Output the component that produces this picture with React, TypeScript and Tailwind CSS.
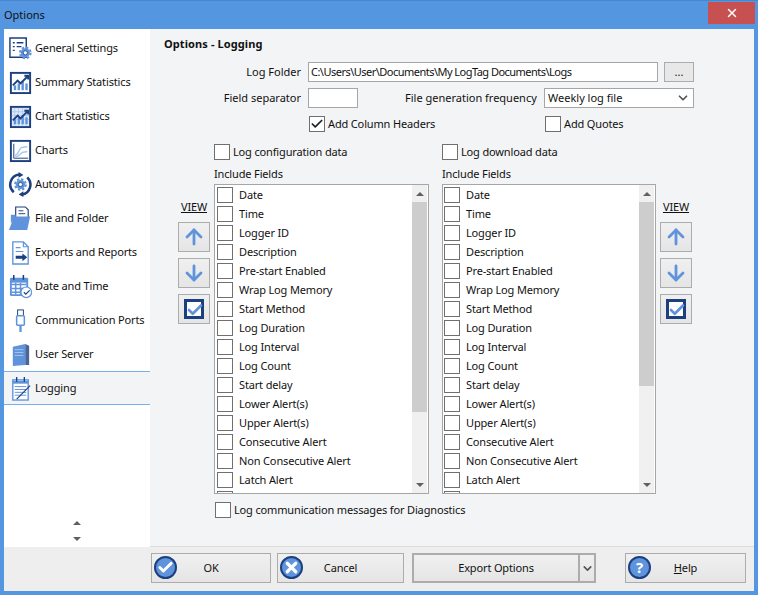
import { X, ChevronDown, Check, ArrowUp, ArrowDown } from 'lucide-react';

const NAVY = '#1c3f7f';
const BLUE = '#5f94dc';
const PALE = '#a9c6ec';

const Gear = ({ cx, cy, r }: { cx: number; cy: number; r: number }) => (
  <g>
    <circle cx={cx} cy={cy} r={r * 0.92} fill="none" stroke={BLUE} strokeWidth={r * 0.36} strokeDasharray={`${r * 0.42} ${r * 0.3}`} />
    <circle cx={cx} cy={cy} r={r * 0.8} fill={BLUE} />
    <circle cx={cx} cy={cy} r={r * 0.36} fill="#fff" stroke={NAVY} strokeWidth="0.8" />
  </g>
);

const Bars = () => (
  <g fill={BLUE}>
    <rect x="6" y="16" width="2.5" height="5" />
    <rect x="10" y="14" width="2.5" height="7" />
    <rect x="14" y="12" width="2.5" height="9" />
    <rect x="18" y="14" width="2.5" height="7" />
  </g>
);

const Icons: Record<string, React.ReactNode> = {
  settings: (
    <>
      <path d="M2 2h17v20H2z" fill="#fff" stroke={NAVY} strokeWidth="1.5" />
      <path d="M5 7h2M9 7h7M5 11h2M9 11h5M5 15h2" stroke={NAVY} strokeWidth="1.4" />
      <Gear cx={18} cy={17.5} r={6} />
    </>
  ),
  summary: (
    <>
      <rect x="3" y="3" width="20" height="21" fill="#fff" stroke={NAVY} strokeWidth="2" />
      <Bars />
      <path d="M5 16l5-5 3 3 7-7M17 6h4v4" fill="none" stroke={NAVY} strokeWidth="2" />
    </>
  ),
  chart: (
    <>
      <rect x="3" y="3" width="20" height="21" fill="#dce8f7" stroke={NAVY} strokeWidth="2" />
      <path d="M7 4v19M11 4v19M15 4v19M19 4v19M4 8h18M4 12h18M4 16h18" stroke={PALE} strokeWidth="0.8" />
      <Bars />
      <path d="M5 17l5-5 3 3 7-7M17 7h4v4" fill="none" stroke={NAVY} strokeWidth="2" />
    </>
  ),
  charts: (
    <>
      <rect x="3" y="3" width="20" height="21" fill="#fff" stroke={NAVY} strokeWidth="2" />
      <path d="M6 6v15h15" fill="none" stroke={NAVY} strokeWidth="1" />
      <path d="M7 18c4 0 4-7 7-8s3-1 6-1" fill="none" stroke={PALE} strokeWidth="1.5" />
      <path d="M7 20c4 0 6-4 8-5s3 0 5-1" fill="none" stroke={PALE} strokeWidth="1.5" />
    </>
  ),
  automation: (
    <>
      <path d="M6 21A10.5 10.5 0 0 1 12 2.6M20 5.5A10.5 10.5 0 0 1 15 23.4" fill="none" stroke={NAVY} strokeWidth="2.6" />
      <path d="M11 0l5 3-5 3zM16 20l-5 3.4 5 2.6z" fill={NAVY} />
      <Gear cx={13} cy={13} r={6} />
    </>
  ),
  folder: (
    <>
      <path d="M8 1h10l3 3v12H8z" fill="#fff" stroke={NAVY} strokeWidth="1.2" />
      <path d="M11 5h5M11 8h7" stroke={NAVY} strokeWidth="1" />
      <path d="M6 12l2-1h15l-3 14H1z" fill={BLUE} />
      <path d="M3 18V9h5v3z" fill={BLUE} />
    </>
  ),
  exports: (
    <>
      <path d="M5 2h11l5 5v18H5z" fill="#fff" stroke={BLUE} strokeWidth="1.4" />
      <path d="M16 2v5h5" fill="none" stroke={BLUE} strokeWidth="1.2" />
      <path d="M8 8h5M8 12h8" stroke={BLUE} strokeWidth="1.2" />
      <path d="M8 16.5h7V14l5 4-5 4v-2.5H8z" fill={NAVY} />
    </>
  ),
  date: (
    <>
      <rect x="2" y="4" width="19" height="19" rx="1.5" fill={BLUE} />
      <rect x="4" y="9" width="15" height="12" fill="#fff" />
      <path d="M6 1v5M16 1v5" stroke={NAVY} strokeWidth="1.6" />
      <path d="M4 11h15M4 15h15M4 19h15M8 9v12M13 9v12" stroke={BLUE} strokeWidth="1.5" />
      <circle cx="19" cy="19" r="5.5" fill="#fff" stroke={BLUE} strokeWidth="1.2" />
      <path d="M16.5 19l2 2 4-4" fill="none" stroke={NAVY} strokeWidth="1.2" />
    </>
  ),
  usb: (
    <>
      <rect x="10" y="2" width="6" height="6" fill="#fff" stroke={NAVY} strokeWidth="1" />
      <rect x="9" y="8" width="8" height="10" rx="1" fill="#fff" stroke={BLUE} strokeWidth="1.6" />
      <path d="M13 18v7" stroke={BLUE} strokeWidth="2.4" />
    </>
  ),
  server: (
    <>
      <path d="M5 5l13-3v22l-13 1z" fill={BLUE} />
      <path d="M18 2l4 2v20l-4 0z" fill={NAVY} opacity="0.8" />
      <path d="M7 8h9M7 11h9M7 14h9" stroke={PALE} strokeWidth="1" />
    </>
  ),
  logging: (
    <>
      <rect x="5" y="4" width="16" height="21" fill="#fff" stroke={BLUE} strokeWidth="1.4" />
      <path d="M5 5h16v3H5z" fill={BLUE} />
      <path d="M9 1v5M17 1v5" stroke={NAVY} strokeWidth="1.4" />
      <path d="M7 11h12M7 14h12M7 17h12M7 20h12" stroke={BLUE} strokeWidth="1" />
      <path d="M9 24L23 10" stroke={NAVY} strokeWidth="1.2" />
    </>
  ),
};

const navItems = [
  ['settings', 'General Settings'],
  ['summary', 'Summary Statistics'],
  ['chart', 'Chart Statistics'],
  ['charts', 'Charts'],
  ['automation', 'Automation'],
  ['folder', 'File and Folder'],
  ['exports', 'Exports and Reports'],
  ['date', 'Date and Time'],
  ['usb', 'Communication Ports'],
  ['server', 'User Server'],
  ['logging', 'Logging'],
];

const fields = [
  'Date',
  'Time',
  'Logger ID',
  'Description',
  'Pre-start Enabled',
  'Wrap Log Memory',
  'Start Method',
  'Log Duration',
  'Log Interval',
  'Log Count',
  'Start delay',
  'Lower Alert(s)',
  'Upper Alert(s)',
  'Consecutive Alert',
  'Non Consecutive Alert',
  'Latch Alert',
  '',
];

const Box = ({ checked = false }: { checked?: boolean }) => (
  <span className="flex h-4 w-4 shrink-0 items-center justify-center border border-[#707070] bg-white">
    {checked && <Check size={14} strokeWidth={3} className="text-[#222]" />}
  </span>
);

const Triangle = ({ down = false }: { down?: boolean }) => (
  <span
    className={
      down
        ? 'h-0 w-0 border-x-[4px] border-t-[4px] border-x-transparent border-t-[#606060]'
        : 'h-0 w-0 border-x-[4px] border-b-[4px] border-x-transparent border-b-[#606060]'
    }
  />
);

const FieldList = ({ inset, width, thumb }: { inset: string; width: string; thumb: string }) => (
  <div className={`flex h-[310px] ${width} overflow-hidden border border-[#a6a6a6] bg-white`}>
    <div className={`flex-1 overflow-hidden pt-[2px] ${inset}`}>
      {fields.map((f, i) => (
        <div key={i} className="mb-[3px] flex h-4 items-center gap-[6px]">
          <Box />
          <span>{f}</span>
        </div>
      ))}
    </div>
    <div className="mr-px flex w-[15px] flex-col bg-[#f0f0f0]">
      <div className="flex h-[17px] items-center justify-center">
        <Triangle />
      </div>
      <div className={`${thumb} bg-[#cdcdcd]`} />
      <div className="mt-auto flex h-[17px] items-center justify-center">
        <Triangle down />
      </div>
    </div>
  </div>
);

const SquareButton = ({ children }: { children: React.ReactNode }) => (
  <div className="flex h-[30px] w-8 items-center justify-center border border-[#acacac] bg-linear-to-b from-[#f0f0f0] to-[#e5e5e5]">
    {children}
  </div>
);

const ViewColumn = () => (
  <div className="flex w-8 flex-col items-center gap-[6px] pt-[55px]">
    <span className="mb-px h-4 leading-4 underline">VIEW</span>
    <SquareButton>
      <ArrowUp size={24} strokeWidth={2.8} color={BLUE} />
    </SquareButton>
    <SquareButton>
      <ArrowDown size={24} strokeWidth={2.8} color={BLUE} />
    </SquareButton>
    <SquareButton>
      <span className="relative h-5 w-5 border-[3px] border-[#1c3f7f] bg-white">
        <Check size={18} strokeWidth={3.5} color={BLUE} className="absolute -left-px -top-px" />
      </span>
    </SquareButton>
  </div>
);

const Disc = ({ children }: { children: React.ReactNode }) => (
  <span className="flex h-[23px] w-[23px] shrink-0 items-center justify-center rounded-full border-2 border-[#1c3f7f] bg-[#5f94dc] text-white">
    {children}
  </span>
);

const FootButton = ({ width, icon, label }: { width: string; icon: React.ReactNode; label: React.ReactNode }) => (
  <div className={`relative flex h-[30px] ${width} items-center justify-center border border-[#acacac] bg-linear-to-b from-[#f0f0f0] to-[#e5e5e5]`}>
    <span className="absolute left-[2px] top-[2px]">{icon}</span>
    {label}
  </div>
);

export default function App() {
  return (
    <div className="flex h-[595px] w-[758px] flex-col bg-[#5596e0] font-['Noto_Sans',sans-serif] text-[11px] tracking-[-0.15px] text-[#111]">
      <div className="flex h-[29px] shrink-0 items-start justify-between border-t border-[#4a86cc] pl-1 pr-[3px]">
        <span className="mt-[6px] leading-4 tracking-normal">Options</span>
        <div className="mt-px flex h-[22px] w-[47px] items-center justify-center bg-[#c75050]">
          <X size={14} strokeWidth={2.5} className="text-white" />
        </div>
      </div>

      <div className="mx-1 mb-1 flex flex-1 flex-col">
        <div className="flex h-[518px]">
          <nav className="flex w-[146px] shrink-0 flex-col bg-white pt-[2px]">
            {navItems.map(([id, label]) => (
              <div
                key={id}
                className={
                  id === 'logging'
                    ? 'flex h-[34px] items-center gap-[2px] border-y border-[#7ab0e8] bg-[#f3f4f6] pl-1'
                    : 'flex h-[34px] items-center gap-[2px] pl-1'
                }
              >
                <svg viewBox="0 0 26 26" className="h-[25px] w-[25px] shrink-0">
                  {Icons[id]}
                </svg>
                <span>{label}</span>
              </div>
            ))}
            <div className="mt-auto mb-[6px] flex flex-col items-center gap-[12px] pr-[1px]">
              <Triangle />
              <Triangle down />
            </div>
          </nav>

          <main className="flex flex-1 flex-col border-b border-[#dcdcdc] bg-[#f3f4f6]">
            <h1 className="ml-[14px] mt-[7px] h-4 font-bold leading-4 tracking-[0.1px]">Options - Logging</h1>

            <div className="mt-[10px] flex h-5 items-center tracking-normal">
              <label className="w-[151px] text-right">Log Folder</label>
              <div className="ml-[7px] flex h-5 w-[350px] items-center overflow-hidden whitespace-nowrap border border-[#a6a6a6] bg-white pl-[2px] tracking-[-0.52px]">
                C:\Users\User\Documents\My LogTag Documents\Logs
              </div>
              <div className="ml-[6px] flex h-5 w-[30px] items-center justify-center border border-[#acacac] bg-[#e8e8e8]">
                ...
              </div>
            </div>

            <div className="mt-[6px] flex h-5 items-center tracking-normal">
              <label className="w-[151px] text-right">Field separator</label>
              <div className="ml-[7px] h-5 w-[50px] border border-[#a6a6a6] bg-white" />
              <label className="ml-[47px] w-[132px] whitespace-nowrap">File generation frequency</label>
              <div className="ml-[7px] flex h-5 w-[150px] items-center justify-between border border-[#a6a6a6] bg-white pl-[3px] pr-[3px]">
                <span>Weekly log file</span>
                <ChevronDown size={14} strokeWidth={3} className="text-[#555]" />
              </div>
            </div>

            <div className="mt-2 flex h-4 items-center">
              <div className="ml-[159px] flex w-[236px] items-center gap-[3px]">
                <Box checked />
                <span>Add Column Headers</span>
              </div>
              <div className="flex items-center gap-[3px]">
                <Box />
                <span>Add Quotes</span>
              </div>
            </div>

            <div className="ml-[28px] mt-3 flex">
              <ViewColumn />
              <div className="ml-1 flex flex-col">
                <div className="flex h-4 items-center gap-[3px]">
                  <Box />
                  <span>Log configuration data</span>
                </div>
                <div className="flex h-6 items-center pt-[4px]">Include Fields</div>
                <FieldList inset="pl-[2px]" width="w-[215px]" thumb="h-[210px]" />
              </div>
              <div className="ml-[13px] flex flex-col">
                <div className="flex h-4 items-center gap-[3px]">
                  <Box />
                  <span>Log download data</span>
                </div>
                <div className="flex h-6 items-center pt-[4px]">Include Fields</div>
                <FieldList inset="pl-[1px]" width="w-[214px]" thumb="h-[184px]" />
              </div>
              <div className="ml-1">
                <ViewColumn />
              </div>
            </div>

            <div className="ml-[65px] mt-2 flex h-4 items-center gap-[3px]">
              <Box />
              <span>Log communication messages for Diagnostics</span>
            </div>
          </main>
        </div>

        <div className="flex h-[44px] items-start bg-[#eeeeee] pl-[147px] pt-[6px]">
          <FootButton
            width="w-[120px]"
            icon={<Disc><Check size={17} strokeWidth={4} /></Disc>}
            label="OK"
          />
          <div className="ml-[6px]">
            <FootButton
              width="w-[127px]"
              icon={<Disc><X size={17} strokeWidth={4.5} /></Disc>}
              label="Cancel"
            />
          </div>
          <div className="ml-2 flex h-[30px] w-[184px] border-2 border-[#acacac] bg-linear-to-b from-[#f0f0f0] to-[#e5e5e5]">
            <div className="flex flex-1 items-center justify-center border-r-2 border-[#acacac]">Export Options</div>
            <div className="flex w-[14px] items-center justify-center">
              <ChevronDown size={13} strokeWidth={3} className="text-[#555]" />
            </div>
          </div>
          <div className="ml-[29px]">
            <FootButton
              width="w-[121px]"
              icon={<Disc><span className="text-[15px] font-bold leading-none">?</span></Disc>}
              label={<span><span className="underline">H</span>elp</span>}
            />
          </div>
        </div>
      </div>
    </div>
  );
}
